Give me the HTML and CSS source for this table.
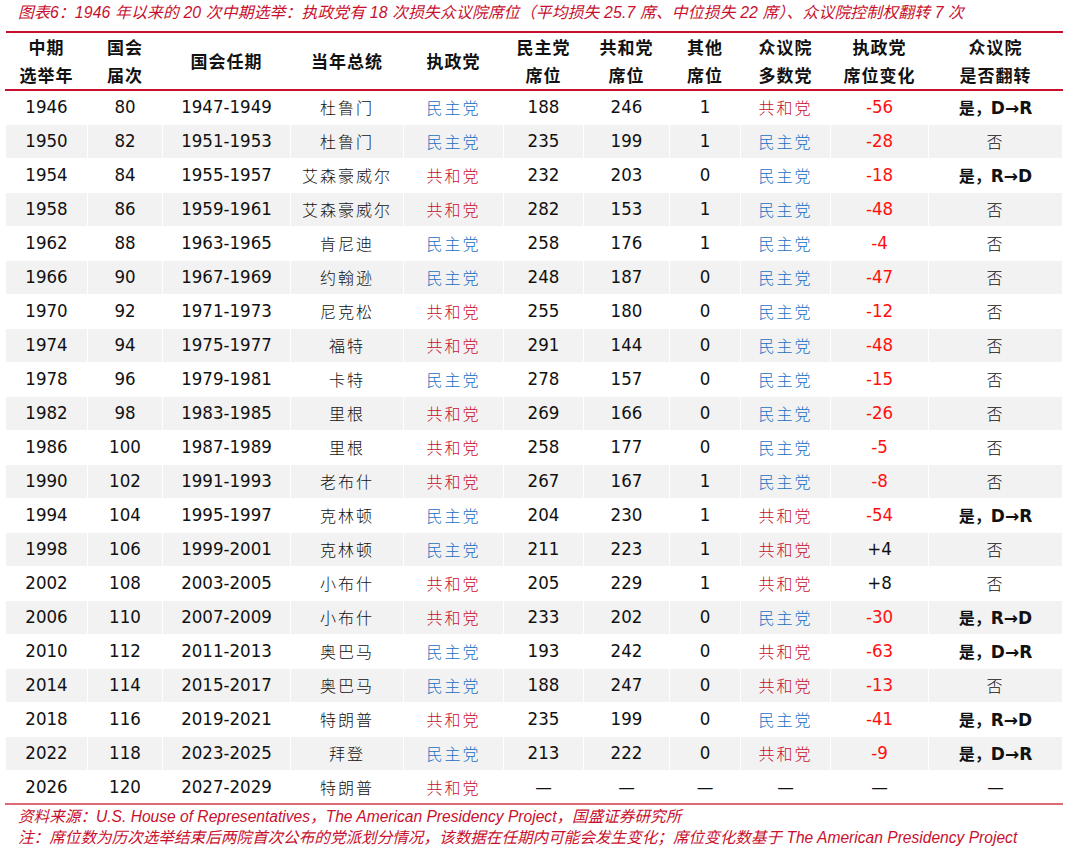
FILE: index.html
```html
<!DOCTYPE html>
<html lang="zh">
<head>
<meta charset="utf-8">
<link rel="stylesheet" href="styles.css">
</head>
<body>
<div class="page">
  <div class="title">图表6：1946 年以来的 20 次中期选举：执政党有 18 次损失众议院席位（平均损失 25.7 席、中位损失 22 席）、众议院控制权翻转 7 次</div>
  <table class="tbl">
    <colgroup>
      <col class="c1"><col class="c2"><col class="c3"><col class="c4"><col class="c5"><col class="c6"><col class="c7"><col class="c8"><col class="c9"><col class="c10"><col class="c11">
    </colgroup>
    <thead>
      <tr>
        <th>中期<br>选举年</th><th>国会<br>届次</th><th>国会任期</th><th>当年总统</th><th>执政党</th><th>民主党<br>席位</th><th>共和党<br>席位</th><th>其他<br>席位</th><th>众议院<br>多数党</th><th>执政党<br>席位变化</th><th>众议院<br>是否翻转</th>
      </tr>
    </thead>
    <tbody>
      <tr><td>1946</td><td>80</td><td>1947-1949</td><td class="cn">杜鲁门</td><td class="cn d">民主党</td><td>188</td><td>246</td><td>1</td><td class="cn r">共和党</td><td class="neg">-56</td><td class="cn"><span class="yes">是，</span><b class="flip">D→R</b></td></tr>
      <tr><td>1950</td><td>82</td><td>1951-1953</td><td class="cn">杜鲁门</td><td class="cn d">民主党</td><td>235</td><td>199</td><td>1</td><td class="cn d">民主党</td><td class="neg">-28</td><td class="cn">否</td></tr>
      <tr><td>1954</td><td>84</td><td>1955-1957</td><td class="cn">艾森豪威尔</td><td class="cn r">共和党</td><td>232</td><td>203</td><td>0</td><td class="cn d">民主党</td><td class="neg">-18</td><td class="cn"><span class="yes">是，</span><b class="flip">R→D</b></td></tr>
      <tr><td>1958</td><td>86</td><td>1959-1961</td><td class="cn">艾森豪威尔</td><td class="cn r">共和党</td><td>282</td><td>153</td><td>1</td><td class="cn d">民主党</td><td class="neg">-48</td><td class="cn">否</td></tr>
      <tr><td>1962</td><td>88</td><td>1963-1965</td><td class="cn">肯尼迪</td><td class="cn d">民主党</td><td>258</td><td>176</td><td>1</td><td class="cn d">民主党</td><td class="neg">-4</td><td class="cn">否</td></tr>
      <tr><td>1966</td><td>90</td><td>1967-1969</td><td class="cn">约翰逊</td><td class="cn d">民主党</td><td>248</td><td>187</td><td>0</td><td class="cn d">民主党</td><td class="neg">-47</td><td class="cn">否</td></tr>
      <tr><td>1970</td><td>92</td><td>1971-1973</td><td class="cn">尼克松</td><td class="cn r">共和党</td><td>255</td><td>180</td><td>0</td><td class="cn d">民主党</td><td class="neg">-12</td><td class="cn">否</td></tr>
      <tr><td>1974</td><td>94</td><td>1975-1977</td><td class="cn">福特</td><td class="cn r">共和党</td><td>291</td><td>144</td><td>0</td><td class="cn d">民主党</td><td class="neg">-48</td><td class="cn">否</td></tr>
      <tr><td>1978</td><td>96</td><td>1979-1981</td><td class="cn">卡特</td><td class="cn d">民主党</td><td>278</td><td>157</td><td>0</td><td class="cn d">民主党</td><td class="neg">-15</td><td class="cn">否</td></tr>
      <tr><td>1982</td><td>98</td><td>1983-1985</td><td class="cn">里根</td><td class="cn r">共和党</td><td>269</td><td>166</td><td>0</td><td class="cn d">民主党</td><td class="neg">-26</td><td class="cn">否</td></tr>
      <tr><td>1986</td><td>100</td><td>1987-1989</td><td class="cn">里根</td><td class="cn r">共和党</td><td>258</td><td>177</td><td>0</td><td class="cn d">民主党</td><td class="neg">-5</td><td class="cn">否</td></tr>
      <tr><td>1990</td><td>102</td><td>1991-1993</td><td class="cn">老布什</td><td class="cn r">共和党</td><td>267</td><td>167</td><td>1</td><td class="cn d">民主党</td><td class="neg">-8</td><td class="cn">否</td></tr>
      <tr><td>1994</td><td>104</td><td>1995-1997</td><td class="cn">克林顿</td><td class="cn d">民主党</td><td>204</td><td>230</td><td>1</td><td class="cn r">共和党</td><td class="neg">-54</td><td class="cn"><span class="yes">是，</span><b class="flip">D→R</b></td></tr>
      <tr><td>1998</td><td>106</td><td>1999-2001</td><td class="cn">克林顿</td><td class="cn d">民主党</td><td>211</td><td>223</td><td>1</td><td class="cn r">共和党</td><td>+4</td><td class="cn">否</td></tr>
      <tr><td>2002</td><td>108</td><td>2003-2005</td><td class="cn">小布什</td><td class="cn r">共和党</td><td>205</td><td>229</td><td>1</td><td class="cn r">共和党</td><td>+8</td><td class="cn">否</td></tr>
      <tr><td>2006</td><td>110</td><td>2007-2009</td><td class="cn">小布什</td><td class="cn r">共和党</td><td>233</td><td>202</td><td>0</td><td class="cn d">民主党</td><td class="neg">-30</td><td class="cn"><span class="yes">是，</span><b class="flip">R→D</b></td></tr>
      <tr><td>2010</td><td>112</td><td>2011-2013</td><td class="cn">奥巴马</td><td class="cn d">民主党</td><td>193</td><td>242</td><td>0</td><td class="cn r">共和党</td><td class="neg">-63</td><td class="cn"><span class="yes">是，</span><b class="flip">D→R</b></td></tr>
      <tr><td>2014</td><td>114</td><td>2015-2017</td><td class="cn">奥巴马</td><td class="cn d">民主党</td><td>188</td><td>247</td><td>0</td><td class="cn r">共和党</td><td class="neg">-13</td><td class="cn">否</td></tr>
      <tr><td>2018</td><td>116</td><td>2019-2021</td><td class="cn">特朗普</td><td class="cn r">共和党</td><td>235</td><td>199</td><td>0</td><td class="cn d">民主党</td><td class="neg">-41</td><td class="cn"><span class="yes">是，</span><b class="flip">R→D</b></td></tr>
      <tr><td>2022</td><td>118</td><td>2023-2025</td><td class="cn">拜登</td><td class="cn d">民主党</td><td>213</td><td>222</td><td>0</td><td class="cn r">共和党</td><td class="neg">-9</td><td class="cn"><span class="yes">是，</span><b class="flip">D→R</b></td></tr>
      <tr><td>2026</td><td>120</td><td>2027-2029</td><td class="cn">特朗普</td><td class="cn r">共和党</td><td>—</td><td>—</td><td>—</td><td>—</td><td>—</td><td>—</td></tr>
    </tbody>
  </table>
  <div class="notes">
    <div class="note">资料来源：U.S. House of Representatives，The American Presidency Project，国盛证券研究所</div>
    <div class="note">注：席位数为历次选举结束后两院首次公布的党派划分情况，该数据在任期内可能会发生变化；席位变化数基于 The American Presidency Project</div>
  </div>
</div>
</body>
</html>
```

FILE: styles.css
```css
html, body {
  margin: 0;
  padding: 0;
  background: #ffffff;
}

.page {
  width: 1066px;
  height: 850px;
  padding: 3px 4px 0 5px;
  box-sizing: border-box;
  font-family: "DejaVu Sans Condensed", "DejaVu Sans", "Noto Sans CJK SC", sans-serif;
  color: #111;
}

.title {
  font-family: "Liberation Sans", "Noto Sans CJK SC", sans-serif;
  font-style: italic;
  font-size: 15.8px;
  letter-spacing: 0.15px;
  color: #c8102e;
  height: 28px;
  line-height: 20px;
  padding-left: 13px;
  white-space: nowrap;
}

.tbl {
  width: 1057px;
  table-layout: fixed;
  border-collapse: collapse;
  border-top: 2px solid #c8102e;
  border-bottom: 2px solid #de6b73;
}

.c1 { width: 82px; }
.c2 { width: 75px; }
.c3 { width: 128px; }
.c4 { width: 113px; }
.c5 { width: 100px; }
.c6 { width: 80px; }
.c7 { width: 86px; }
.c8 { width: 71px; }
.c9 { width: 90px; }
.c10 { width: 98px; }
.c11 { width: 134px; }

.tbl thead tr {
  height: 56px;
  border-bottom: 2px solid #c8102e;
}

.tbl th {
  padding: 0;
  font-family: "Noto Sans CJK SC", sans-serif;
  font-weight: 700;
  font-size: 17px;
  line-height: 28px;
  letter-spacing: 1px;
  text-align: center;
  vertical-align: middle;
  color: #111;
}

.tbl tbody tr {
  height: 34px;
}

.tbl td {
  padding: 0;
  border: 1px solid #ffffff;
  text-align: center;
  vertical-align: middle;
  font-size: 18.5px;
  line-height: 30px;
  white-space: nowrap;
}

.tbl tbody tr:nth-child(even) td {
  background: #f2f2f2;
}

.tbl td.cn {
  font-family: "Noto Sans CJK SC", sans-serif;
  font-weight: 300;
  font-size: 16px;
  letter-spacing: 2px;
}

.tbl td.d { color: #1a6fc2; }
.tbl td.r { color: #c8102e; }
.tbl td.neg { color: #ff1010; }

.yes {
  font-weight: 700;
  letter-spacing: 0;
}

.flip {
  font-family: "DejaVu Sans", sans-serif;
  font-weight: 700;
  font-size: 17px;
  letter-spacing: 0;
}

.notes {
  padding-top: 1px;
  padding-left: 13px;
}

.note {
  font-family: "Liberation Sans", "Noto Sans CJK SC", sans-serif;
  font-style: italic;
  font-size: 15.6px;
  line-height: 21px;
  color: #c8102e;
  white-space: nowrap;
}
```
